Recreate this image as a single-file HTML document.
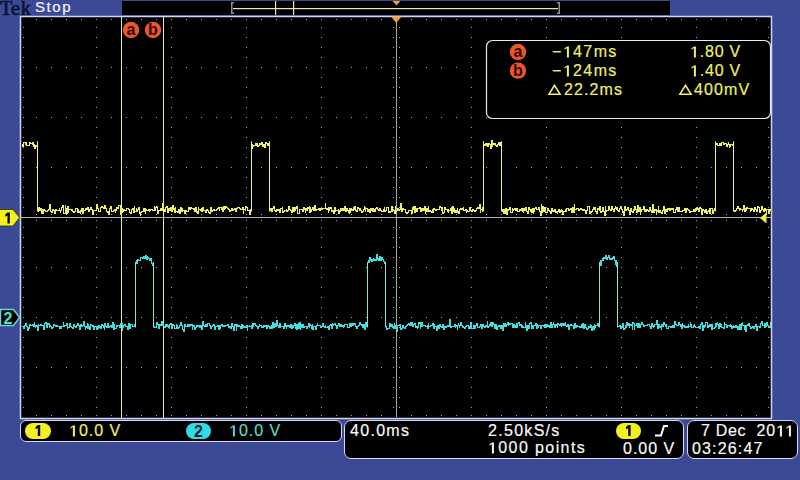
<!DOCTYPE html>
<html><head><meta charset="utf-8"><style>
html,body{margin:0;padding:0;}
body{width:800px;height:480px;background:#3c4a96;position:relative;overflow:hidden;font-family:"Liberation Sans",sans-serif;}
.t{position:absolute;white-space:pre;line-height:1;font-size:16px;-webkit-text-stroke:0.2px currentColor;}
.o{display:inline-block;position:relative;height:16px;vertical-align:top;}
.o svg{position:absolute;left:0;top:0;}
svg{position:absolute;left:0;top:0;}
.box{position:absolute;background:#000;border:1.5px solid #d4d8f8;box-sizing:border-box;}
.pill{position:absolute;border-radius:8px;text-align:center;font-size:16px;line-height:17px;font-weight:bold;}
</style></head><body>
<div class="t" style="left:0;top:-2px;font-family:'Liberation Serif',serif;font-weight:normal;font-size:20px;letter-spacing:0.2px;color:#0e1236;-webkit-text-stroke:0.7px #0e1236;">T<span style="margin-left:-1.5px">e</span><span style="margin-left:0.8px">k</span></div>
<div class="t" style="left:35px;top:-1px;color:#f4f4ff;letter-spacing:1.6px;font-size:15px;">Stop</div>
<svg width="800" height="480" viewBox="0 0 800 480"><rect x="20" y="16" width="752" height="403" fill="#000"/><path d="M23 27h1v1h-1zM23 37h1v1h-1zM23 47h1v1h-1zM23 57h1v1h-1zM23 67h1v1h-1zM23 77h1v1h-1zM23 87h1v1h-1zM23 97h1v1h-1zM23 107h1v1h-1zM23 117h1v1h-1zM23 127h1v1h-1zM23 137h1v1h-1zM23 147h1v1h-1zM23 157h1v1h-1zM23 167h1v1h-1zM23 177h1v1h-1zM23 187h1v1h-1zM23 197h1v1h-1zM23 207h1v1h-1zM23 217h1v1h-1zM23 227h1v1h-1zM23 237h1v1h-1zM23 247h1v1h-1zM23 257h1v1h-1zM23 267h1v1h-1zM23 277h1v1h-1zM23 287h1v1h-1zM23 297h1v1h-1zM23 307h1v1h-1zM23 317h1v1h-1zM23 327h1v1h-1zM23 337h1v1h-1zM23 347h1v1h-1zM23 357h1v1h-1zM23 367h1v1h-1zM23 377h1v1h-1zM23 387h1v1h-1zM23 397h1v1h-1zM23 407h1v1h-1zM36 19h1v1h-1zM36 67h1v1h-1zM36 117h1v1h-1zM36 167h1v1h-1zM36 214h1v1h-1zM36 220h1v1h-1zM36 267h1v1h-1zM36 317h1v1h-1zM36 367h1v1h-1zM36 415h1v1h-1zM51 19h1v1h-1zM51 67h1v1h-1zM51 117h1v1h-1zM51 167h1v1h-1zM51 214h1v1h-1zM51 220h1v1h-1zM51 267h1v1h-1zM51 317h1v1h-1zM51 367h1v1h-1zM51 415h1v1h-1zM66 19h1v1h-1zM66 67h1v1h-1zM66 117h1v1h-1zM66 167h1v1h-1zM66 214h1v1h-1zM66 220h1v1h-1zM66 267h1v1h-1zM66 317h1v1h-1zM66 367h1v1h-1zM66 415h1v1h-1zM81 19h1v1h-1zM81 67h1v1h-1zM81 117h1v1h-1zM81 167h1v1h-1zM81 214h1v1h-1zM81 220h1v1h-1zM81 267h1v1h-1zM81 317h1v1h-1zM81 367h1v1h-1zM81 415h1v1h-1zM96 19h1v1h-1zM96 27h1v1h-1zM96 37h1v1h-1zM96 47h1v1h-1zM96 57h1v1h-1zM96 67h1v1h-1zM96 77h1v1h-1zM96 87h1v1h-1zM96 97h1v1h-1zM96 107h1v1h-1zM96 117h1v1h-1zM96 127h1v1h-1zM96 137h1v1h-1zM96 147h1v1h-1zM96 157h1v1h-1zM96 167h1v1h-1zM96 177h1v1h-1zM96 187h1v1h-1zM96 197h1v1h-1zM96 207h1v1h-1zM96 214h1v1h-1zM96 217h1v1h-1zM96 220h1v1h-1zM96 227h1v1h-1zM96 237h1v1h-1zM96 247h1v1h-1zM96 257h1v1h-1zM96 267h1v1h-1zM96 277h1v1h-1zM96 287h1v1h-1zM96 297h1v1h-1zM96 307h1v1h-1zM96 317h1v1h-1zM96 327h1v1h-1zM96 337h1v1h-1zM96 347h1v1h-1zM96 357h1v1h-1zM96 367h1v1h-1zM96 377h1v1h-1zM96 387h1v1h-1zM96 397h1v1h-1zM96 407h1v1h-1zM96 415h1v1h-1zM111 19h1v1h-1zM111 67h1v1h-1zM111 117h1v1h-1zM111 167h1v1h-1zM111 214h1v1h-1zM111 220h1v1h-1zM111 267h1v1h-1zM111 317h1v1h-1zM111 367h1v1h-1zM111 415h1v1h-1zM126 19h1v1h-1zM126 67h1v1h-1zM126 117h1v1h-1zM126 167h1v1h-1zM126 214h1v1h-1zM126 220h1v1h-1zM126 267h1v1h-1zM126 317h1v1h-1zM126 367h1v1h-1zM126 415h1v1h-1zM141 19h1v1h-1zM141 67h1v1h-1zM141 117h1v1h-1zM141 167h1v1h-1zM141 214h1v1h-1zM141 220h1v1h-1zM141 267h1v1h-1zM141 317h1v1h-1zM141 367h1v1h-1zM141 415h1v1h-1zM156 19h1v1h-1zM156 67h1v1h-1zM156 117h1v1h-1zM156 167h1v1h-1zM156 214h1v1h-1zM156 220h1v1h-1zM156 267h1v1h-1zM156 317h1v1h-1zM156 367h1v1h-1zM156 415h1v1h-1zM171 19h1v1h-1zM171 27h1v1h-1zM171 37h1v1h-1zM171 47h1v1h-1zM171 57h1v1h-1zM171 67h1v1h-1zM171 77h1v1h-1zM171 87h1v1h-1zM171 97h1v1h-1zM171 107h1v1h-1zM171 117h1v1h-1zM171 127h1v1h-1zM171 137h1v1h-1zM171 147h1v1h-1zM171 157h1v1h-1zM171 167h1v1h-1zM171 177h1v1h-1zM171 187h1v1h-1zM171 197h1v1h-1zM171 207h1v1h-1zM171 214h1v1h-1zM171 217h1v1h-1zM171 220h1v1h-1zM171 227h1v1h-1zM171 237h1v1h-1zM171 247h1v1h-1zM171 257h1v1h-1zM171 267h1v1h-1zM171 277h1v1h-1zM171 287h1v1h-1zM171 297h1v1h-1zM171 307h1v1h-1zM171 317h1v1h-1zM171 327h1v1h-1zM171 337h1v1h-1zM171 347h1v1h-1zM171 357h1v1h-1zM171 367h1v1h-1zM171 377h1v1h-1zM171 387h1v1h-1zM171 397h1v1h-1zM171 407h1v1h-1zM171 415h1v1h-1zM186 19h1v1h-1zM186 67h1v1h-1zM186 117h1v1h-1zM186 167h1v1h-1zM186 214h1v1h-1zM186 220h1v1h-1zM186 267h1v1h-1zM186 317h1v1h-1zM186 367h1v1h-1zM186 415h1v1h-1zM201 19h1v1h-1zM201 67h1v1h-1zM201 117h1v1h-1zM201 167h1v1h-1zM201 214h1v1h-1zM201 220h1v1h-1zM201 267h1v1h-1zM201 317h1v1h-1zM201 367h1v1h-1zM201 415h1v1h-1zM216 19h1v1h-1zM216 67h1v1h-1zM216 117h1v1h-1zM216 167h1v1h-1zM216 214h1v1h-1zM216 220h1v1h-1zM216 267h1v1h-1zM216 317h1v1h-1zM216 367h1v1h-1zM216 415h1v1h-1zM231 19h1v1h-1zM231 67h1v1h-1zM231 117h1v1h-1zM231 167h1v1h-1zM231 214h1v1h-1zM231 220h1v1h-1zM231 267h1v1h-1zM231 317h1v1h-1zM231 367h1v1h-1zM231 415h1v1h-1zM246 19h1v1h-1zM246 27h1v1h-1zM246 37h1v1h-1zM246 47h1v1h-1zM246 57h1v1h-1zM246 67h1v1h-1zM246 77h1v1h-1zM246 87h1v1h-1zM246 97h1v1h-1zM246 107h1v1h-1zM246 117h1v1h-1zM246 127h1v1h-1zM246 137h1v1h-1zM246 147h1v1h-1zM246 157h1v1h-1zM246 167h1v1h-1zM246 177h1v1h-1zM246 187h1v1h-1zM246 197h1v1h-1zM246 207h1v1h-1zM246 214h1v1h-1zM246 217h1v1h-1zM246 220h1v1h-1zM246 227h1v1h-1zM246 237h1v1h-1zM246 247h1v1h-1zM246 257h1v1h-1zM246 267h1v1h-1zM246 277h1v1h-1zM246 287h1v1h-1zM246 297h1v1h-1zM246 307h1v1h-1zM246 317h1v1h-1zM246 327h1v1h-1zM246 337h1v1h-1zM246 347h1v1h-1zM246 357h1v1h-1zM246 367h1v1h-1zM246 377h1v1h-1zM246 387h1v1h-1zM246 397h1v1h-1zM246 407h1v1h-1zM246 415h1v1h-1zM261 19h1v1h-1zM261 67h1v1h-1zM261 117h1v1h-1zM261 167h1v1h-1zM261 214h1v1h-1zM261 220h1v1h-1zM261 267h1v1h-1zM261 317h1v1h-1zM261 367h1v1h-1zM261 415h1v1h-1zM276 19h1v1h-1zM276 67h1v1h-1zM276 117h1v1h-1zM276 167h1v1h-1zM276 214h1v1h-1zM276 220h1v1h-1zM276 267h1v1h-1zM276 317h1v1h-1zM276 367h1v1h-1zM276 415h1v1h-1zM291 19h1v1h-1zM291 67h1v1h-1zM291 117h1v1h-1zM291 167h1v1h-1zM291 214h1v1h-1zM291 220h1v1h-1zM291 267h1v1h-1zM291 317h1v1h-1zM291 367h1v1h-1zM291 415h1v1h-1zM306 19h1v1h-1zM306 67h1v1h-1zM306 117h1v1h-1zM306 167h1v1h-1zM306 214h1v1h-1zM306 220h1v1h-1zM306 267h1v1h-1zM306 317h1v1h-1zM306 367h1v1h-1zM306 415h1v1h-1zM321 19h1v1h-1zM321 27h1v1h-1zM321 37h1v1h-1zM321 47h1v1h-1zM321 57h1v1h-1zM321 67h1v1h-1zM321 77h1v1h-1zM321 87h1v1h-1zM321 97h1v1h-1zM321 107h1v1h-1zM321 117h1v1h-1zM321 127h1v1h-1zM321 137h1v1h-1zM321 147h1v1h-1zM321 157h1v1h-1zM321 167h1v1h-1zM321 177h1v1h-1zM321 187h1v1h-1zM321 197h1v1h-1zM321 207h1v1h-1zM321 214h1v1h-1zM321 217h1v1h-1zM321 220h1v1h-1zM321 227h1v1h-1zM321 237h1v1h-1zM321 247h1v1h-1zM321 257h1v1h-1zM321 267h1v1h-1zM321 277h1v1h-1zM321 287h1v1h-1zM321 297h1v1h-1zM321 307h1v1h-1zM321 317h1v1h-1zM321 327h1v1h-1zM321 337h1v1h-1zM321 347h1v1h-1zM321 357h1v1h-1zM321 367h1v1h-1zM321 377h1v1h-1zM321 387h1v1h-1zM321 397h1v1h-1zM321 407h1v1h-1zM321 415h1v1h-1zM336 19h1v1h-1zM336 67h1v1h-1zM336 117h1v1h-1zM336 167h1v1h-1zM336 214h1v1h-1zM336 220h1v1h-1zM336 267h1v1h-1zM336 317h1v1h-1zM336 367h1v1h-1zM336 415h1v1h-1zM351 19h1v1h-1zM351 67h1v1h-1zM351 117h1v1h-1zM351 167h1v1h-1zM351 214h1v1h-1zM351 220h1v1h-1zM351 267h1v1h-1zM351 317h1v1h-1zM351 367h1v1h-1zM351 415h1v1h-1zM366 19h1v1h-1zM366 67h1v1h-1zM366 117h1v1h-1zM366 167h1v1h-1zM366 214h1v1h-1zM366 220h1v1h-1zM366 267h1v1h-1zM366 317h1v1h-1zM366 367h1v1h-1zM366 415h1v1h-1zM381 19h1v1h-1zM381 67h1v1h-1zM381 117h1v1h-1zM381 167h1v1h-1zM381 214h1v1h-1zM381 220h1v1h-1zM381 267h1v1h-1zM381 317h1v1h-1zM381 367h1v1h-1zM381 415h1v1h-1zM393 27h1v1h-1zM393 37h1v1h-1zM393 47h1v1h-1zM393 57h1v1h-1zM393 67h1v1h-1zM393 77h1v1h-1zM393 87h1v1h-1zM393 97h1v1h-1zM393 107h1v1h-1zM393 117h1v1h-1zM393 127h1v1h-1zM393 137h1v1h-1zM393 147h1v1h-1zM393 157h1v1h-1zM393 167h1v1h-1zM393 177h1v1h-1zM393 187h1v1h-1zM393 197h1v1h-1zM393 207h1v1h-1zM393 217h1v1h-1zM393 227h1v1h-1zM393 237h1v1h-1zM393 247h1v1h-1zM393 257h1v1h-1zM393 267h1v1h-1zM393 277h1v1h-1zM393 287h1v1h-1zM393 297h1v1h-1zM393 307h1v1h-1zM393 317h1v1h-1zM393 327h1v1h-1zM393 337h1v1h-1zM393 347h1v1h-1zM393 357h1v1h-1zM393 367h1v1h-1zM393 377h1v1h-1zM393 387h1v1h-1zM393 397h1v1h-1zM393 407h1v1h-1zM396 19h1v1h-1zM396 67h1v1h-1zM396 117h1v1h-1zM396 167h1v1h-1zM396 214h1v1h-1zM396 220h1v1h-1zM396 267h1v1h-1zM396 317h1v1h-1zM396 367h1v1h-1zM396 415h1v1h-1zM399 27h1v1h-1zM399 37h1v1h-1zM399 47h1v1h-1zM399 57h1v1h-1zM399 67h1v1h-1zM399 77h1v1h-1zM399 87h1v1h-1zM399 97h1v1h-1zM399 107h1v1h-1zM399 117h1v1h-1zM399 127h1v1h-1zM399 137h1v1h-1zM399 147h1v1h-1zM399 157h1v1h-1zM399 167h1v1h-1zM399 177h1v1h-1zM399 187h1v1h-1zM399 197h1v1h-1zM399 207h1v1h-1zM399 217h1v1h-1zM399 227h1v1h-1zM399 237h1v1h-1zM399 247h1v1h-1zM399 257h1v1h-1zM399 267h1v1h-1zM399 277h1v1h-1zM399 287h1v1h-1zM399 297h1v1h-1zM399 307h1v1h-1zM399 317h1v1h-1zM399 327h1v1h-1zM399 337h1v1h-1zM399 347h1v1h-1zM399 357h1v1h-1zM399 367h1v1h-1zM399 377h1v1h-1zM399 387h1v1h-1zM399 397h1v1h-1zM399 407h1v1h-1zM411 19h1v1h-1zM411 67h1v1h-1zM411 117h1v1h-1zM411 167h1v1h-1zM411 214h1v1h-1zM411 220h1v1h-1zM411 267h1v1h-1zM411 317h1v1h-1zM411 367h1v1h-1zM411 415h1v1h-1zM426 19h1v1h-1zM426 67h1v1h-1zM426 117h1v1h-1zM426 167h1v1h-1zM426 214h1v1h-1zM426 220h1v1h-1zM426 267h1v1h-1zM426 317h1v1h-1zM426 367h1v1h-1zM426 415h1v1h-1zM441 19h1v1h-1zM441 67h1v1h-1zM441 117h1v1h-1zM441 167h1v1h-1zM441 214h1v1h-1zM441 220h1v1h-1zM441 267h1v1h-1zM441 317h1v1h-1zM441 367h1v1h-1zM441 415h1v1h-1zM456 19h1v1h-1zM456 67h1v1h-1zM456 117h1v1h-1zM456 167h1v1h-1zM456 214h1v1h-1zM456 220h1v1h-1zM456 267h1v1h-1zM456 317h1v1h-1zM456 367h1v1h-1zM456 415h1v1h-1zM471 19h1v1h-1zM471 27h1v1h-1zM471 37h1v1h-1zM471 47h1v1h-1zM471 57h1v1h-1zM471 67h1v1h-1zM471 77h1v1h-1zM471 87h1v1h-1zM471 97h1v1h-1zM471 107h1v1h-1zM471 117h1v1h-1zM471 127h1v1h-1zM471 137h1v1h-1zM471 147h1v1h-1zM471 157h1v1h-1zM471 167h1v1h-1zM471 177h1v1h-1zM471 187h1v1h-1zM471 197h1v1h-1zM471 207h1v1h-1zM471 214h1v1h-1zM471 217h1v1h-1zM471 220h1v1h-1zM471 227h1v1h-1zM471 237h1v1h-1zM471 247h1v1h-1zM471 257h1v1h-1zM471 267h1v1h-1zM471 277h1v1h-1zM471 287h1v1h-1zM471 297h1v1h-1zM471 307h1v1h-1zM471 317h1v1h-1zM471 327h1v1h-1zM471 337h1v1h-1zM471 347h1v1h-1zM471 357h1v1h-1zM471 367h1v1h-1zM471 377h1v1h-1zM471 387h1v1h-1zM471 397h1v1h-1zM471 407h1v1h-1zM471 415h1v1h-1zM486 19h1v1h-1zM486 67h1v1h-1zM486 117h1v1h-1zM486 167h1v1h-1zM486 214h1v1h-1zM486 220h1v1h-1zM486 267h1v1h-1zM486 317h1v1h-1zM486 367h1v1h-1zM486 415h1v1h-1zM501 19h1v1h-1zM501 67h1v1h-1zM501 117h1v1h-1zM501 167h1v1h-1zM501 214h1v1h-1zM501 220h1v1h-1zM501 267h1v1h-1zM501 317h1v1h-1zM501 367h1v1h-1zM501 415h1v1h-1zM516 19h1v1h-1zM516 67h1v1h-1zM516 117h1v1h-1zM516 167h1v1h-1zM516 214h1v1h-1zM516 220h1v1h-1zM516 267h1v1h-1zM516 317h1v1h-1zM516 367h1v1h-1zM516 415h1v1h-1zM531 19h1v1h-1zM531 67h1v1h-1zM531 117h1v1h-1zM531 167h1v1h-1zM531 214h1v1h-1zM531 220h1v1h-1zM531 267h1v1h-1zM531 317h1v1h-1zM531 367h1v1h-1zM531 415h1v1h-1zM546 19h1v1h-1zM546 27h1v1h-1zM546 37h1v1h-1zM546 47h1v1h-1zM546 57h1v1h-1zM546 67h1v1h-1zM546 77h1v1h-1zM546 87h1v1h-1zM546 97h1v1h-1zM546 107h1v1h-1zM546 117h1v1h-1zM546 127h1v1h-1zM546 137h1v1h-1zM546 147h1v1h-1zM546 157h1v1h-1zM546 167h1v1h-1zM546 177h1v1h-1zM546 187h1v1h-1zM546 197h1v1h-1zM546 207h1v1h-1zM546 214h1v1h-1zM546 217h1v1h-1zM546 220h1v1h-1zM546 227h1v1h-1zM546 237h1v1h-1zM546 247h1v1h-1zM546 257h1v1h-1zM546 267h1v1h-1zM546 277h1v1h-1zM546 287h1v1h-1zM546 297h1v1h-1zM546 307h1v1h-1zM546 317h1v1h-1zM546 327h1v1h-1zM546 337h1v1h-1zM546 347h1v1h-1zM546 357h1v1h-1zM546 367h1v1h-1zM546 377h1v1h-1zM546 387h1v1h-1zM546 397h1v1h-1zM546 407h1v1h-1zM546 415h1v1h-1zM561 19h1v1h-1zM561 67h1v1h-1zM561 117h1v1h-1zM561 167h1v1h-1zM561 214h1v1h-1zM561 220h1v1h-1zM561 267h1v1h-1zM561 317h1v1h-1zM561 367h1v1h-1zM561 415h1v1h-1zM576 19h1v1h-1zM576 67h1v1h-1zM576 117h1v1h-1zM576 167h1v1h-1zM576 214h1v1h-1zM576 220h1v1h-1zM576 267h1v1h-1zM576 317h1v1h-1zM576 367h1v1h-1zM576 415h1v1h-1zM591 19h1v1h-1zM591 67h1v1h-1zM591 117h1v1h-1zM591 167h1v1h-1zM591 214h1v1h-1zM591 220h1v1h-1zM591 267h1v1h-1zM591 317h1v1h-1zM591 367h1v1h-1zM591 415h1v1h-1zM606 19h1v1h-1zM606 67h1v1h-1zM606 117h1v1h-1zM606 167h1v1h-1zM606 214h1v1h-1zM606 220h1v1h-1zM606 267h1v1h-1zM606 317h1v1h-1zM606 367h1v1h-1zM606 415h1v1h-1zM621 19h1v1h-1zM621 27h1v1h-1zM621 37h1v1h-1zM621 47h1v1h-1zM621 57h1v1h-1zM621 67h1v1h-1zM621 77h1v1h-1zM621 87h1v1h-1zM621 97h1v1h-1zM621 107h1v1h-1zM621 117h1v1h-1zM621 127h1v1h-1zM621 137h1v1h-1zM621 147h1v1h-1zM621 157h1v1h-1zM621 167h1v1h-1zM621 177h1v1h-1zM621 187h1v1h-1zM621 197h1v1h-1zM621 207h1v1h-1zM621 214h1v1h-1zM621 217h1v1h-1zM621 220h1v1h-1zM621 227h1v1h-1zM621 237h1v1h-1zM621 247h1v1h-1zM621 257h1v1h-1zM621 267h1v1h-1zM621 277h1v1h-1zM621 287h1v1h-1zM621 297h1v1h-1zM621 307h1v1h-1zM621 317h1v1h-1zM621 327h1v1h-1zM621 337h1v1h-1zM621 347h1v1h-1zM621 357h1v1h-1zM621 367h1v1h-1zM621 377h1v1h-1zM621 387h1v1h-1zM621 397h1v1h-1zM621 407h1v1h-1zM621 415h1v1h-1zM636 19h1v1h-1zM636 67h1v1h-1zM636 117h1v1h-1zM636 167h1v1h-1zM636 214h1v1h-1zM636 220h1v1h-1zM636 267h1v1h-1zM636 317h1v1h-1zM636 367h1v1h-1zM636 415h1v1h-1zM651 19h1v1h-1zM651 67h1v1h-1zM651 117h1v1h-1zM651 167h1v1h-1zM651 214h1v1h-1zM651 220h1v1h-1zM651 267h1v1h-1zM651 317h1v1h-1zM651 367h1v1h-1zM651 415h1v1h-1zM666 19h1v1h-1zM666 67h1v1h-1zM666 117h1v1h-1zM666 167h1v1h-1zM666 214h1v1h-1zM666 220h1v1h-1zM666 267h1v1h-1zM666 317h1v1h-1zM666 367h1v1h-1zM666 415h1v1h-1zM681 19h1v1h-1zM681 67h1v1h-1zM681 117h1v1h-1zM681 167h1v1h-1zM681 214h1v1h-1zM681 220h1v1h-1zM681 267h1v1h-1zM681 317h1v1h-1zM681 367h1v1h-1zM681 415h1v1h-1zM696 19h1v1h-1zM696 27h1v1h-1zM696 37h1v1h-1zM696 47h1v1h-1zM696 57h1v1h-1zM696 67h1v1h-1zM696 77h1v1h-1zM696 87h1v1h-1zM696 97h1v1h-1zM696 107h1v1h-1zM696 117h1v1h-1zM696 127h1v1h-1zM696 137h1v1h-1zM696 147h1v1h-1zM696 157h1v1h-1zM696 167h1v1h-1zM696 177h1v1h-1zM696 187h1v1h-1zM696 197h1v1h-1zM696 207h1v1h-1zM696 214h1v1h-1zM696 217h1v1h-1zM696 220h1v1h-1zM696 227h1v1h-1zM696 237h1v1h-1zM696 247h1v1h-1zM696 257h1v1h-1zM696 267h1v1h-1zM696 277h1v1h-1zM696 287h1v1h-1zM696 297h1v1h-1zM696 307h1v1h-1zM696 317h1v1h-1zM696 327h1v1h-1zM696 337h1v1h-1zM696 347h1v1h-1zM696 357h1v1h-1zM696 367h1v1h-1zM696 377h1v1h-1zM696 387h1v1h-1zM696 397h1v1h-1zM696 407h1v1h-1zM696 415h1v1h-1zM711 19h1v1h-1zM711 67h1v1h-1zM711 117h1v1h-1zM711 167h1v1h-1zM711 214h1v1h-1zM711 220h1v1h-1zM711 267h1v1h-1zM711 317h1v1h-1zM711 367h1v1h-1zM711 415h1v1h-1zM726 19h1v1h-1zM726 67h1v1h-1zM726 117h1v1h-1zM726 167h1v1h-1zM726 214h1v1h-1zM726 220h1v1h-1zM726 267h1v1h-1zM726 317h1v1h-1zM726 367h1v1h-1zM726 415h1v1h-1zM741 19h1v1h-1zM741 67h1v1h-1zM741 117h1v1h-1zM741 167h1v1h-1zM741 214h1v1h-1zM741 220h1v1h-1zM741 267h1v1h-1zM741 317h1v1h-1zM741 367h1v1h-1zM741 415h1v1h-1zM756 19h1v1h-1zM756 67h1v1h-1zM756 117h1v1h-1zM756 167h1v1h-1zM756 214h1v1h-1zM756 220h1v1h-1zM756 267h1v1h-1zM756 317h1v1h-1zM756 367h1v1h-1zM756 415h1v1h-1zM768 27h1v1h-1zM768 37h1v1h-1zM768 47h1v1h-1zM768 57h1v1h-1zM768 67h1v1h-1zM768 77h1v1h-1zM768 87h1v1h-1zM768 97h1v1h-1zM768 107h1v1h-1zM768 117h1v1h-1zM768 127h1v1h-1zM768 137h1v1h-1zM768 147h1v1h-1zM768 157h1v1h-1zM768 167h1v1h-1zM768 177h1v1h-1zM768 187h1v1h-1zM768 197h1v1h-1zM768 207h1v1h-1zM768 217h1v1h-1zM768 227h1v1h-1zM768 237h1v1h-1zM768 247h1v1h-1zM768 257h1v1h-1zM768 267h1v1h-1zM768 277h1v1h-1zM768 287h1v1h-1zM768 297h1v1h-1zM768 307h1v1h-1zM768 317h1v1h-1zM768 327h1v1h-1zM768 337h1v1h-1zM768 347h1v1h-1zM768 357h1v1h-1zM768 367h1v1h-1zM768 377h1v1h-1zM768 387h1v1h-1zM768 397h1v1h-1zM768 407h1v1h-1z" fill="#a8a8a8"/><rect x="396" y="17" width="1" height="400" fill="#a8a8a0"/><rect x="21" y="217" width="750" height="1" fill="#b4b4a8"/><rect x="121" y="17" width="1" height="401" fill="#e4ecac"/><rect x="163" y="17" width="1" height="401" fill="#e4ecac"/><path d="M37 141.2h1v70.30000000000001h-1zM251 141.2h1v70.30000000000001h-1zM269 141.2h1v70.30000000000001h-1zM483 141.2h1v70.30000000000001h-1zM501 141.2h1v70.30000000000001h-1zM715 141.2h1v70.30000000000001h-1zM733 141.2h1v70.30000000000001h-1z" fill="#f0f0a0"/><path d="M22 144h1v3h-1zM23 142h1v5h-1zM24 142h1v1h-1zM25 142h1v3h-1zM26 142h1v4h-1zM27 145h1v1h-1zM28 145h1v1h-1zM29 142h1v4h-1zM30 142h1v2h-1zM31 143h1v1h-1zM32 142h1v3h-1zM33 142h1v5h-1zM34 144h1v5h-1zM35 145h1v4h-1zM36 145h1v2h-1zM38 207h1v5h-1zM39 207h1v4h-1zM40 208h1v3h-1zM41 208h1v6h-1zM42 209h1v5h-1zM43 209h1v5h-1zM44 209h1v2h-1zM45 210h1v2h-1zM46 211h1v1h-1zM47 210h1v2h-1zM48 209h1v2h-1zM49 204h1v6h-1zM50 204h1v8h-1zM51 211h1v2h-1zM52 209h1v4h-1zM53 209h1v2h-1zM54 210h1v4h-1zM55 209h1v5h-1zM56 209h1v2h-1zM57 210h1v1h-1zM58 210h1v1h-1zM59 208h1v3h-1zM60 210h1v3h-1zM61 207h1v4h-1zM62 205h1v3h-1zM63 205h1v9h-1zM64 213h1v1h-1zM65 205h1v9h-1zM66 208h1v6h-1zM67 206h1v8h-1zM68 206h1v7h-1zM69 209h1v1h-1zM70 209h1v1h-1zM71 209h1v2h-1zM72 209h1v3h-1zM73 211h1v2h-1zM74 211h1v2h-1zM75 208h1v4h-1zM76 208h1v1h-1zM77 208h1v5h-1zM78 209h1v4h-1zM79 211h1v2h-1zM80 210h1v4h-1zM81 208h1v4h-1zM82 208h1v6h-1zM83 208h1v6h-1zM84 210h1v1h-1zM85 208h1v3h-1zM86 208h1v2h-1zM87 207h1v3h-1zM88 207h1v5h-1zM89 209h1v3h-1zM90 207h1v3h-1zM91 207h1v3h-1zM92 209h1v6h-1zM93 210h1v5h-1zM94 210h1v1h-1zM95 210h1v1h-1zM96 204h1v7h-1zM97 204h1v5h-1zM98 208h1v4h-1zM99 211h1v1h-1zM100 207h1v5h-1zM101 206h1v2h-1zM102 206h1v2h-1zM103 207h1v2h-1zM104 205h1v4h-1zM105 205h1v4h-1zM106 208h1v4h-1zM107 211h1v2h-1zM108 211h1v4h-1zM109 208h1v7h-1zM110 206h1v3h-1zM111 206h1v6h-1zM112 211h1v1h-1zM113 210h1v2h-1zM114 209h1v2h-1zM115 209h1v4h-1zM116 207h1v4h-1zM117 207h1v2h-1zM118 205h1v4h-1zM119 205h1v1h-1zM120 205h1v10h-1zM121 208h1v7h-1zM122 208h1v5h-1zM123 209h1v3h-1zM124 209h1v2h-1zM125 210h1v1h-1zM126 208h1v3h-1zM127 208h1v1h-1zM128 208h1v2h-1zM129 209h1v4h-1zM130 212h1v2h-1zM131 209h1v5h-1zM132 208h1v2h-1zM133 208h1v5h-1zM134 206h1v7h-1zM135 211h1v1h-1zM136 208h1v4h-1zM137 209h1v3h-1zM138 207h1v3h-1zM139 207h1v7h-1zM140 212h1v4h-1zM141 211h1v2h-1zM142 211h1v1h-1zM143 208h1v4h-1zM144 208h1v4h-1zM145 208h1v6h-1zM146 209h1v2h-1zM147 210h1v1h-1zM148 209h1v2h-1zM149 209h1v3h-1zM150 209h1v2h-1zM151 209h1v1h-1zM152 209h1v2h-1zM153 210h1v1h-1zM154 206h1v5h-1zM155 207h1v4h-1zM156 206h1v2h-1zM157 206h1v8h-1zM158 210h1v4h-1zM159 210h1v1h-1zM160 208h1v3h-1zM161 208h1v3h-1zM162 203h1v8h-1zM163 203h1v7h-1zM164 209h1v3h-1zM165 207h1v5h-1zM166 206h1v2h-1zM167 206h1v7h-1zM168 208h1v5h-1zM169 208h1v3h-1zM170 207h1v4h-1zM171 207h1v5h-1zM172 205h1v7h-1zM173 205h1v5h-1zM174 208h1v5h-1zM175 207h1v6h-1zM176 211h1v1h-1zM177 211h1v2h-1zM178 209h1v4h-1zM179 209h1v5h-1zM180 207h1v7h-1zM181 207h1v5h-1zM182 208h1v4h-1zM183 210h1v1h-1zM184 210h1v4h-1zM185 210h1v4h-1zM186 210h1v2h-1zM187 211h1v1h-1zM188 207h1v5h-1zM189 207h1v3h-1zM190 207h1v3h-1zM191 207h1v2h-1zM192 208h1v1h-1zM193 208h1v2h-1zM194 208h1v4h-1zM195 207h1v5h-1zM196 207h1v6h-1zM197 211h1v3h-1zM198 207h1v7h-1zM199 209h1v1h-1zM200 209h1v2h-1zM201 208h1v4h-1zM202 207h1v5h-1zM203 207h1v4h-1zM204 210h1v1h-1zM205 210h1v3h-1zM206 209h1v4h-1zM207 209h1v2h-1zM208 210h1v3h-1zM209 212h1v2h-1zM210 207h1v7h-1zM211 207h1v5h-1zM212 210h1v2h-1zM213 209h1v2h-1zM214 209h1v2h-1zM215 210h1v1h-1zM216 209h1v2h-1zM217 208h1v2h-1zM218 207h1v2h-1zM219 207h1v4h-1zM220 207h1v1h-1zM221 207h1v3h-1zM222 207h1v5h-1zM223 206h1v6h-1zM224 206h1v4h-1zM225 206h1v3h-1zM226 206h1v2h-1zM227 207h1v2h-1zM228 208h1v2h-1zM229 209h1v3h-1zM230 210h1v2h-1zM231 208h1v3h-1zM232 208h1v3h-1zM233 209h1v2h-1zM234 208h1v2h-1zM235 208h1v4h-1zM236 208h1v4h-1zM237 207h1v2h-1zM238 207h1v1h-1zM239 207h1v2h-1zM240 208h1v2h-1zM241 209h1v1h-1zM242 207h1v3h-1zM243 207h1v7h-1zM244 209h1v1h-1zM245 206h1v5h-1zM246 206h1v2h-1zM247 207h1v4h-1zM248 210h1v1h-1zM249 210h1v5h-1zM250 209h1v6h-1zM252 144h1v5h-1zM253 145h1v2h-1zM254 145h1v1h-1zM255 143h1v3h-1zM256 143h1v3h-1zM257 143h1v4h-1zM258 145h1v2h-1zM259 143h1v3h-1zM260 143h1v2h-1zM261 142h1v3h-1zM262 142h1v5h-1zM263 144h1v3h-1zM264 144h1v4h-1zM265 142h1v6h-1zM266 142h1v2h-1zM267 143h1v3h-1zM268 143h1v3h-1zM270 208h1v3h-1zM271 208h1v4h-1zM272 208h1v4h-1zM273 206h1v3h-1zM274 206h1v5h-1zM275 210h1v2h-1zM276 209h1v3h-1zM277 209h1v2h-1zM278 209h1v2h-1zM279 209h1v4h-1zM280 208h1v5h-1zM281 208h1v1h-1zM282 207h1v6h-1zM283 211h1v2h-1zM284 210h1v2h-1zM285 210h1v1h-1zM286 209h1v3h-1zM287 210h1v2h-1zM288 206h1v5h-1zM289 206h1v4h-1zM290 209h1v2h-1zM291 210h1v3h-1zM292 207h1v6h-1zM293 207h1v5h-1zM294 207h1v5h-1zM295 207h1v4h-1zM296 206h1v3h-1zM297 206h1v8h-1zM298 213h1v1h-1zM299 209h1v5h-1zM300 209h1v1h-1zM301 209h1v1h-1zM302 209h1v3h-1zM303 207h1v5h-1zM304 207h1v3h-1zM305 208h1v5h-1zM306 208h1v3h-1zM307 207h1v4h-1zM308 207h1v2h-1zM309 206h1v7h-1zM310 207h1v6h-1zM311 209h1v3h-1zM312 207h1v3h-1zM313 207h1v4h-1zM314 205h1v6h-1zM315 205h1v6h-1zM316 209h1v2h-1zM317 209h1v1h-1zM318 208h1v2h-1zM319 208h1v3h-1zM320 208h1v3h-1zM321 208h1v2h-1zM322 208h1v2h-1zM323 208h1v1h-1zM324 208h1v1h-1zM325 203h1v6h-1zM326 208h1v2h-1zM327 208h1v2h-1zM328 207h1v6h-1zM329 207h1v4h-1zM330 207h1v2h-1zM331 207h1v5h-1zM332 210h1v2h-1zM333 210h1v4h-1zM334 207h1v7h-1zM335 207h1v5h-1zM336 210h1v1h-1zM337 210h1v1h-1zM338 209h1v5h-1zM339 210h1v4h-1zM340 208h1v4h-1zM341 208h1v3h-1zM342 208h1v3h-1zM343 208h1v3h-1zM344 206h1v5h-1zM345 206h1v6h-1zM346 208h1v4h-1zM347 208h1v3h-1zM348 210h1v3h-1zM349 208h1v6h-1zM350 208h1v5h-1zM351 208h1v3h-1zM352 209h1v2h-1zM353 207h1v4h-1zM354 206h1v4h-1zM355 206h1v5h-1zM356 210h1v2h-1zM357 207h1v5h-1zM358 207h1v2h-1zM359 208h1v3h-1zM360 208h1v3h-1zM361 210h1v3h-1zM362 211h1v2h-1zM363 209h1v3h-1zM364 206h1v4h-1zM365 207h1v5h-1zM366 208h1v1h-1zM367 208h1v4h-1zM368 209h1v3h-1zM369 209h1v4h-1zM370 208h1v5h-1zM371 208h1v3h-1zM372 208h1v4h-1zM373 208h1v4h-1zM374 209h1v3h-1zM375 208h1v4h-1zM376 207h1v2h-1zM377 207h1v3h-1zM378 209h1v2h-1zM379 208h1v3h-1zM380 208h1v3h-1zM381 210h1v2h-1zM382 211h1v1h-1zM383 209h1v3h-1zM384 207h1v5h-1zM385 210h1v2h-1zM386 207h1v4h-1zM387 207h1v1h-1zM388 207h1v6h-1zM389 211h1v2h-1zM390 211h1v2h-1zM391 206h1v6h-1zM392 206h1v6h-1zM393 209h1v2h-1zM394 210h1v4h-1zM395 206h1v8h-1zM396 210h1v2h-1zM397 208h1v3h-1zM398 208h1v3h-1zM399 209h1v2h-1zM400 203h1v7h-1zM401 203h1v9h-1zM402 208h1v4h-1zM403 208h1v2h-1zM404 209h1v1h-1zM405 209h1v4h-1zM406 212h1v2h-1zM407 212h1v2h-1zM408 210h1v3h-1zM409 210h1v1h-1zM410 210h1v1h-1zM411 210h1v4h-1zM412 207h1v7h-1zM413 206h1v4h-1zM414 206h1v7h-1zM415 206h1v7h-1zM416 208h1v4h-1zM417 208h1v4h-1zM418 208h1v1h-1zM419 207h1v2h-1zM420 207h1v5h-1zM421 208h1v4h-1zM422 208h1v3h-1zM423 208h1v3h-1zM424 206h1v5h-1zM425 206h1v8h-1zM426 208h1v4h-1zM427 208h1v4h-1zM428 206h1v6h-1zM429 210h1v2h-1zM430 210h1v2h-1zM431 211h1v2h-1zM432 209h1v4h-1zM433 208h1v5h-1zM434 208h1v2h-1zM435 209h1v2h-1zM436 209h1v2h-1zM437 209h1v1h-1zM438 209h1v1h-1zM439 206h1v4h-1zM440 206h1v2h-1zM441 207h1v4h-1zM442 207h1v7h-1zM443 212h1v2h-1zM444 207h1v6h-1zM445 207h1v3h-1zM446 209h1v1h-1zM447 209h1v3h-1zM448 209h1v4h-1zM449 210h1v1h-1zM450 208h1v3h-1zM451 207h1v7h-1zM452 206h1v8h-1zM453 206h1v6h-1zM454 208h1v5h-1zM455 210h1v3h-1zM456 210h1v3h-1zM457 208h1v5h-1zM458 211h1v3h-1zM459 209h1v5h-1zM460 208h1v2h-1zM461 208h1v2h-1zM462 208h1v2h-1zM463 207h1v4h-1zM464 210h1v1h-1zM465 209h1v2h-1zM466 209h1v4h-1zM467 210h1v2h-1zM468 211h1v1h-1zM469 207h1v5h-1zM470 207h1v4h-1zM471 210h1v2h-1zM472 209h1v3h-1zM473 209h1v2h-1zM474 210h1v2h-1zM475 210h1v2h-1zM476 208h1v3h-1zM477 207h1v2h-1zM478 207h1v2h-1zM479 204h1v5h-1zM480 204h1v9h-1zM481 209h1v1h-1zM482 207h1v5h-1zM484 144h1v2h-1zM485 143h1v3h-1zM486 143h1v3h-1zM487 143h1v4h-1zM488 143h1v4h-1zM489 143h1v2h-1zM490 144h1v5h-1zM491 140h1v9h-1zM492 140h1v7h-1zM493 143h1v2h-1zM494 143h1v2h-1zM495 143h1v3h-1zM496 145h1v2h-1zM497 144h1v3h-1zM498 142h1v3h-1zM499 142h1v4h-1zM500 142h1v4h-1zM502 209h1v3h-1zM503 209h1v5h-1zM504 209h1v5h-1zM505 208h1v6h-1zM506 208h1v7h-1zM507 209h1v6h-1zM508 209h1v2h-1zM509 207h1v3h-1zM510 207h1v6h-1zM511 212h1v1h-1zM512 208h1v5h-1zM513 209h1v2h-1zM514 208h1v2h-1zM515 208h1v3h-1zM516 208h1v3h-1zM517 208h1v4h-1zM518 211h1v1h-1zM519 209h1v3h-1zM520 209h1v2h-1zM521 208h1v3h-1zM522 208h1v4h-1zM523 208h1v5h-1zM524 208h1v3h-1zM525 207h1v4h-1zM526 207h1v5h-1zM527 211h1v3h-1zM528 207h1v7h-1zM529 207h1v3h-1zM530 209h1v3h-1zM531 209h1v4h-1zM532 208h1v5h-1zM533 208h1v6h-1zM534 208h1v4h-1zM535 207h1v2h-1zM536 207h1v3h-1zM537 209h1v1h-1zM538 207h1v3h-1zM539 207h1v5h-1zM540 211h1v5h-1zM541 204h1v12h-1zM542 206h1v7h-1zM543 206h1v6h-1zM544 207h1v5h-1zM545 207h1v6h-1zM546 212h1v1h-1zM547 208h1v5h-1zM548 208h1v3h-1zM549 210h1v2h-1zM550 211h1v3h-1zM551 208h1v6h-1zM552 208h1v4h-1zM553 210h1v2h-1zM554 209h1v3h-1zM555 209h1v4h-1zM556 211h1v2h-1zM557 211h1v3h-1zM558 209h1v3h-1zM559 209h1v4h-1zM560 210h1v3h-1zM561 209h1v3h-1zM562 210h1v5h-1zM563 211h1v4h-1zM564 211h1v1h-1zM565 209h1v3h-1zM566 208h1v4h-1zM567 208h1v1h-1zM568 208h1v3h-1zM569 209h1v2h-1zM570 208h1v2h-1zM571 208h1v5h-1zM572 207h1v6h-1zM573 207h1v6h-1zM574 204h1v9h-1zM575 209h1v1h-1zM576 208h1v2h-1zM577 208h1v1h-1zM578 208h1v3h-1zM579 209h1v2h-1zM580 208h1v2h-1zM581 208h1v2h-1zM582 209h1v2h-1zM583 209h1v2h-1zM584 209h1v2h-1zM585 210h1v4h-1zM586 210h1v4h-1zM587 206h1v5h-1zM588 206h1v1h-1zM589 206h1v8h-1zM590 211h1v3h-1zM591 211h1v2h-1zM592 209h1v3h-1zM593 207h1v3h-1zM594 207h1v3h-1zM595 207h1v5h-1zM596 211h1v3h-1zM597 208h1v6h-1zM598 208h1v2h-1zM599 206h1v5h-1zM600 206h1v7h-1zM601 211h1v2h-1zM602 207h1v5h-1zM603 207h1v5h-1zM604 211h1v5h-1zM605 206h1v10h-1zM606 210h1v2h-1zM607 210h1v1h-1zM608 206h1v5h-1zM609 206h1v4h-1zM610 209h1v2h-1zM611 206h1v5h-1zM612 206h1v4h-1zM613 209h1v3h-1zM614 208h1v4h-1zM615 206h1v3h-1zM616 207h1v3h-1zM617 207h1v4h-1zM618 210h1v2h-1zM619 208h1v4h-1zM620 206h1v3h-1zM621 206h1v4h-1zM622 209h1v4h-1zM623 211h1v5h-1zM624 206h1v10h-1zM625 206h1v5h-1zM626 209h1v2h-1zM627 207h1v3h-1zM628 207h1v4h-1zM629 210h1v5h-1zM630 208h1v7h-1zM631 208h1v4h-1zM632 211h1v2h-1zM633 209h1v4h-1zM634 206h1v5h-1zM635 206h1v4h-1zM636 209h1v4h-1zM637 205h1v8h-1zM638 205h1v7h-1zM639 207h1v5h-1zM640 207h1v8h-1zM641 209h1v3h-1zM642 209h1v1h-1zM643 206h1v4h-1zM644 206h1v6h-1zM645 209h1v3h-1zM646 209h1v3h-1zM647 209h1v2h-1zM648 210h1v2h-1zM649 207h1v5h-1zM650 207h1v4h-1zM651 210h1v3h-1zM652 204h1v9h-1zM653 204h1v9h-1zM654 209h1v4h-1zM655 209h1v2h-1zM656 209h1v6h-1zM657 210h1v2h-1zM658 206h1v7h-1zM659 210h1v3h-1zM660 210h1v3h-1zM661 212h1v2h-1zM662 210h1v4h-1zM663 206h1v5h-1zM664 206h1v8h-1zM665 209h1v5h-1zM666 209h1v3h-1zM667 208h1v4h-1zM668 208h1v2h-1zM669 208h1v3h-1zM670 208h1v3h-1zM671 208h1v2h-1zM672 208h1v2h-1zM673 208h1v5h-1zM674 212h1v1h-1zM675 209h1v4h-1zM676 207h1v3h-1zM677 207h1v5h-1zM678 207h1v5h-1zM679 207h1v5h-1zM680 211h1v1h-1zM681 211h1v1h-1zM682 210h1v2h-1zM683 210h1v1h-1zM684 208h1v3h-1zM685 208h1v5h-1zM686 208h1v5h-1zM687 208h1v2h-1zM688 209h1v2h-1zM689 210h1v3h-1zM690 211h1v2h-1zM691 211h1v1h-1zM692 211h1v1h-1zM693 209h1v3h-1zM694 209h1v3h-1zM695 208h1v4h-1zM696 208h1v3h-1zM697 207h1v3h-1zM698 208h1v4h-1zM699 207h1v5h-1zM700 207h1v2h-1zM701 208h1v7h-1zM702 209h1v6h-1zM703 209h1v2h-1zM704 210h1v3h-1zM705 209h1v4h-1zM706 209h1v5h-1zM707 211h1v3h-1zM708 210h1v2h-1zM709 208h1v6h-1zM710 208h1v6h-1zM711 208h1v1h-1zM712 208h1v6h-1zM713 210h1v4h-1zM714 208h1v3h-1zM716 143h1v2h-1zM717 143h1v3h-1zM718 145h1v1h-1zM719 143h1v3h-1zM720 143h1v3h-1zM721 142h1v4h-1zM722 142h1v1h-1zM723 142h1v3h-1zM724 143h1v2h-1zM725 143h1v1h-1zM726 143h1v4h-1zM727 144h1v3h-1zM728 142h1v3h-1zM729 144h1v4h-1zM730 144h1v3h-1zM731 144h1v1h-1zM732 144h1v2h-1zM734 210h1v2h-1zM735 210h1v2h-1zM736 208h1v3h-1zM737 206h1v3h-1zM738 206h1v3h-1zM739 208h1v3h-1zM740 208h1v2h-1zM741 209h1v1h-1zM742 209h1v3h-1zM743 205h1v5h-1zM744 205h1v7h-1zM745 208h1v4h-1zM746 207h1v4h-1zM747 207h1v2h-1zM748 208h1v1h-1zM749 208h1v1h-1zM750 208h1v4h-1zM751 208h1v3h-1zM752 208h1v2h-1zM753 209h1v3h-1zM754 207h1v5h-1zM755 207h1v3h-1zM756 209h1v3h-1zM757 206h1v6h-1zM758 206h1v2h-1zM759 207h1v6h-1zM760 210h1v3h-1zM761 206h1v5h-1zM762 206h1v4h-1zM763 209h1v3h-1zM764 208h1v4h-1zM765 208h1v3h-1zM766 209h1v6h-1zM767 209h1v1h-1zM768 209h1v5h-1zM769 209h1v5h-1zM770 209h1v2h-1z" fill="#f0f060"/><path d="M135 262h1v65.5h-1zM153 262h1v65.5h-1zM367 262h1v65.5h-1zM385 262h1v65.5h-1zM599 262h1v65.5h-1zM617 262h1v65.5h-1z" fill="#80e8d8"/><path d="M22 326h1v1h-1zM23 326h1v3h-1zM24 325h1v4h-1zM25 323h1v3h-1zM26 323h1v4h-1zM27 326h1v5h-1zM28 327h1v4h-1zM29 324h1v5h-1zM30 324h1v2h-1zM31 325h1v1h-1zM32 324h1v2h-1zM33 324h1v3h-1zM34 322h1v5h-1zM35 325h1v3h-1zM36 325h1v2h-1zM37 325h1v6h-1zM38 324h1v7h-1zM39 325h1v1h-1zM40 324h1v2h-1zM41 324h1v2h-1zM42 325h1v1h-1zM43 325h1v5h-1zM44 323h1v7h-1zM45 322h1v2h-1zM46 322h1v6h-1zM47 323h1v5h-1zM48 323h1v2h-1zM49 323h1v5h-1zM50 325h1v2h-1zM51 326h1v3h-1zM52 327h1v2h-1zM53 324h1v4h-1zM54 324h1v2h-1zM55 325h1v2h-1zM56 325h1v2h-1zM57 325h1v2h-1zM58 326h1v1h-1zM59 326h1v3h-1zM60 326h1v3h-1zM61 326h1v3h-1zM62 326h1v1h-1zM63 322h1v5h-1zM64 325h1v2h-1zM65 325h1v1h-1zM66 323h1v3h-1zM67 323h1v6h-1zM68 327h1v1h-1zM69 323h1v5h-1zM70 323h1v4h-1zM71 326h1v2h-1zM72 327h1v2h-1zM73 324h1v5h-1zM74 324h1v3h-1zM75 326h1v2h-1zM76 325h1v3h-1zM77 323h1v3h-1zM78 323h1v3h-1zM79 325h1v5h-1zM80 324h1v6h-1zM81 324h1v3h-1zM82 325h1v2h-1zM83 321h1v5h-1zM84 321h1v6h-1zM85 326h1v4h-1zM86 326h1v2h-1zM87 323h1v6h-1zM88 324h1v5h-1zM89 326h1v4h-1zM90 324h1v6h-1zM91 324h1v2h-1zM92 325h1v2h-1zM93 325h1v5h-1zM94 326h1v4h-1zM95 326h1v1h-1zM96 326h1v4h-1zM97 326h1v4h-1zM98 325h1v4h-1zM99 325h1v3h-1zM100 326h1v3h-1zM101 324h1v5h-1zM102 324h1v2h-1zM103 325h1v3h-1zM104 323h1v7h-1zM105 323h1v4h-1zM106 326h1v2h-1zM107 323h1v5h-1zM108 323h1v5h-1zM109 326h1v2h-1zM110 325h1v2h-1zM111 325h1v3h-1zM112 322h1v6h-1zM113 322h1v8h-1zM114 324h1v6h-1zM115 328h1v1h-1zM116 325h1v4h-1zM117 325h1v2h-1zM118 325h1v1h-1zM119 325h1v3h-1zM120 323h1v5h-1zM121 323h1v2h-1zM122 323h1v8h-1zM123 325h1v3h-1zM124 324h1v2h-1zM125 324h1v3h-1zM126 326h1v1h-1zM127 326h1v4h-1zM128 323h1v7h-1zM129 323h1v6h-1zM130 324h1v5h-1zM131 324h1v1h-1zM132 324h1v3h-1zM133 326h1v1h-1zM134 324h1v3h-1zM136 260h1v4h-1zM137 259h1v5h-1zM138 259h1v2h-1zM139 260h1v1h-1zM140 257h1v4h-1zM141 257h1v1h-1zM142 257h1v2h-1zM143 256h1v3h-1zM144 256h1v3h-1zM145 255h1v4h-1zM146 255h1v5h-1zM147 256h1v4h-1zM148 257h1v2h-1zM149 258h1v3h-1zM150 258h1v3h-1zM151 258h1v6h-1zM152 263h1v3h-1zM154 326h1v2h-1zM155 327h1v1h-1zM156 322h1v6h-1zM157 322h1v3h-1zM158 324h1v5h-1zM159 324h1v5h-1zM160 324h1v2h-1zM161 321h1v5h-1zM162 321h1v5h-1zM163 323h1v4h-1zM164 326h1v2h-1zM165 324h1v4h-1zM166 324h1v3h-1zM167 324h1v3h-1zM168 325h1v3h-1zM169 324h1v5h-1zM170 323h1v2h-1zM171 323h1v6h-1zM172 324h1v5h-1zM173 324h1v2h-1zM174 325h1v4h-1zM175 328h1v1h-1zM176 324h1v5h-1zM177 325h1v4h-1zM178 327h1v2h-1zM179 325h1v3h-1zM180 322h1v4h-1zM181 322h1v4h-1zM182 325h1v5h-1zM183 329h1v3h-1zM184 324h1v8h-1zM185 324h1v3h-1zM186 326h1v1h-1zM187 324h1v3h-1zM188 324h1v3h-1zM189 324h1v3h-1zM190 324h1v2h-1zM191 324h1v2h-1zM192 324h1v6h-1zM193 325h1v2h-1zM194 325h1v5h-1zM195 327h1v3h-1zM196 325h1v3h-1zM197 325h1v2h-1zM198 325h1v2h-1zM199 325h1v3h-1zM200 325h1v3h-1zM201 325h1v5h-1zM202 321h1v9h-1zM203 321h1v5h-1zM204 325h1v2h-1zM205 324h1v3h-1zM206 324h1v3h-1zM207 323h1v4h-1zM208 323h1v1h-1zM209 323h1v3h-1zM210 325h1v4h-1zM211 326h1v3h-1zM212 325h1v2h-1zM213 324h1v2h-1zM214 324h1v6h-1zM215 326h1v4h-1zM216 326h1v1h-1zM217 325h1v2h-1zM218 325h1v5h-1zM219 325h1v5h-1zM220 325h1v4h-1zM221 324h1v2h-1zM222 324h1v3h-1zM223 325h1v2h-1zM224 325h1v2h-1zM225 325h1v2h-1zM226 325h1v1h-1zM227 324h1v2h-1zM228 324h1v4h-1zM229 326h1v2h-1zM230 326h1v3h-1zM231 323h1v6h-1zM232 323h1v4h-1zM233 326h1v5h-1zM234 324h1v7h-1zM235 324h1v2h-1zM236 324h1v7h-1zM237 324h1v3h-1zM238 325h1v2h-1zM239 325h1v2h-1zM240 326h1v3h-1zM241 324h1v5h-1zM242 324h1v5h-1zM243 325h1v3h-1zM244 326h1v2h-1zM245 326h1v2h-1zM246 325h1v3h-1zM247 325h1v6h-1zM248 326h1v1h-1zM249 325h1v2h-1zM250 326h1v1h-1zM251 325h1v4h-1zM252 323h1v6h-1zM253 323h1v4h-1zM254 323h1v2h-1zM255 323h1v3h-1zM256 325h1v2h-1zM257 326h1v3h-1zM258 326h1v3h-1zM259 324h1v3h-1zM260 325h1v1h-1zM261 325h1v3h-1zM262 326h1v2h-1zM263 325h1v3h-1zM264 325h1v2h-1zM265 325h1v2h-1zM266 325h1v4h-1zM267 325h1v4h-1zM268 325h1v2h-1zM269 326h1v3h-1zM270 326h1v3h-1zM271 325h1v4h-1zM272 322h1v7h-1zM273 322h1v6h-1zM274 323h1v5h-1zM275 323h1v4h-1zM276 320h1v7h-1zM277 320h1v6h-1zM278 325h1v3h-1zM279 323h1v5h-1zM280 323h1v5h-1zM281 326h1v1h-1zM282 326h1v1h-1zM283 326h1v3h-1zM284 323h1v6h-1zM285 323h1v4h-1zM286 325h1v4h-1zM287 325h1v2h-1zM288 325h1v2h-1zM289 325h1v3h-1zM290 324h1v4h-1zM291 324h1v5h-1zM292 325h1v4h-1zM293 325h1v3h-1zM294 323h1v3h-1zM295 323h1v6h-1zM296 324h1v6h-1zM297 324h1v6h-1zM298 323h1v6h-1zM299 322h1v7h-1zM300 322h1v8h-1zM301 324h1v4h-1zM302 324h1v4h-1zM303 324h1v4h-1zM304 326h1v2h-1zM305 326h1v1h-1zM306 326h1v3h-1zM307 326h1v3h-1zM308 323h1v4h-1zM309 323h1v5h-1zM310 324h1v2h-1zM311 325h1v4h-1zM312 324h1v6h-1zM313 326h1v4h-1zM314 326h1v1h-1zM315 326h1v4h-1zM316 325h1v5h-1zM317 323h1v3h-1zM318 325h1v1h-1zM319 325h1v1h-1zM320 325h1v3h-1zM321 326h1v2h-1zM322 323h1v4h-1zM323 323h1v4h-1zM324 326h1v2h-1zM325 325h1v3h-1zM326 327h1v1h-1zM327 326h1v2h-1zM328 326h1v4h-1zM329 325h1v5h-1zM330 324h1v2h-1zM331 324h1v5h-1zM332 323h1v6h-1zM333 324h1v2h-1zM334 323h1v2h-1zM335 323h1v3h-1zM336 325h1v4h-1zM337 325h1v4h-1zM338 323h1v3h-1zM339 323h1v4h-1zM340 324h1v3h-1zM341 324h1v3h-1zM342 325h1v2h-1zM343 325h1v3h-1zM344 324h1v3h-1zM345 324h1v1h-1zM346 324h1v1h-1zM347 324h1v4h-1zM348 327h1v1h-1zM349 323h1v5h-1zM350 323h1v4h-1zM351 323h1v4h-1zM352 323h1v3h-1zM353 323h1v3h-1zM354 323h1v2h-1zM355 323h1v4h-1zM356 326h1v3h-1zM357 326h1v3h-1zM358 325h1v2h-1zM359 322h1v4h-1zM360 322h1v3h-1zM361 324h1v2h-1zM362 324h1v4h-1zM363 324h1v4h-1zM364 324h1v6h-1zM365 322h1v8h-1zM366 322h1v5h-1zM368 260h1v3h-1zM369 257h1v6h-1zM370 257h1v4h-1zM371 259h1v3h-1zM372 259h1v3h-1zM373 258h1v3h-1zM374 259h1v2h-1zM375 259h1v2h-1zM376 254h1v7h-1zM377 254h1v6h-1zM378 258h1v3h-1zM379 256h1v5h-1zM380 256h1v5h-1zM381 257h1v4h-1zM382 257h1v3h-1zM383 259h1v3h-1zM384 261h1v3h-1zM386 326h1v4h-1zM387 328h1v2h-1zM388 328h1v1h-1zM389 323h1v6h-1zM390 323h1v4h-1zM391 324h1v3h-1zM392 324h1v4h-1zM393 326h1v3h-1zM394 323h1v6h-1zM395 325h1v4h-1zM396 328h1v4h-1zM397 325h1v7h-1zM398 325h1v1h-1zM399 324h1v2h-1zM400 324h1v6h-1zM401 328h1v2h-1zM402 325h1v4h-1zM403 325h1v3h-1zM404 327h1v2h-1zM405 326h1v3h-1zM406 325h1v2h-1zM407 324h1v2h-1zM408 323h1v2h-1zM409 323h1v3h-1zM410 322h1v4h-1zM411 322h1v4h-1zM412 322h1v5h-1zM413 324h1v3h-1zM414 323h1v2h-1zM415 323h1v5h-1zM416 326h1v2h-1zM417 326h1v3h-1zM418 322h1v6h-1zM419 322h1v2h-1zM420 322h1v7h-1zM421 322h1v5h-1zM422 322h1v5h-1zM423 325h1v1h-1zM424 325h1v1h-1zM425 325h1v2h-1zM426 326h1v1h-1zM427 325h1v4h-1zM428 323h1v6h-1zM429 326h1v1h-1zM430 325h1v2h-1zM431 325h1v1h-1zM432 323h1v3h-1zM433 323h1v6h-1zM434 324h1v5h-1zM435 326h1v1h-1zM436 326h1v5h-1zM437 325h1v6h-1zM438 325h1v4h-1zM439 324h1v5h-1zM440 324h1v3h-1zM441 326h1v2h-1zM442 324h1v4h-1zM443 324h1v6h-1zM444 326h1v4h-1zM445 326h1v2h-1zM446 326h1v2h-1zM447 325h1v2h-1zM448 325h1v2h-1zM449 319h1v8h-1zM450 319h1v9h-1zM451 326h1v2h-1zM452 326h1v1h-1zM453 326h1v1h-1zM454 324h1v3h-1zM455 324h1v4h-1zM456 325h1v2h-1zM457 325h1v5h-1zM458 323h1v3h-1zM459 325h1v3h-1zM460 322h1v4h-1zM461 322h1v4h-1zM462 325h1v3h-1zM463 326h1v2h-1zM464 327h1v2h-1zM465 326h1v3h-1zM466 325h1v2h-1zM467 325h1v1h-1zM468 325h1v4h-1zM469 326h1v3h-1zM470 322h1v7h-1zM471 322h1v7h-1zM472 328h1v1h-1zM473 325h1v4h-1zM474 325h1v4h-1zM475 325h1v4h-1zM476 323h1v3h-1zM477 323h1v5h-1zM478 327h1v1h-1zM479 326h1v2h-1zM480 324h1v3h-1zM481 324h1v5h-1zM482 324h1v5h-1zM483 324h1v3h-1zM484 326h1v2h-1zM485 325h1v3h-1zM486 325h1v2h-1zM487 321h1v7h-1zM488 326h1v2h-1zM489 324h1v3h-1zM490 322h1v4h-1zM491 322h1v5h-1zM492 322h1v5h-1zM493 322h1v3h-1zM494 324h1v5h-1zM495 324h1v5h-1zM496 324h1v6h-1zM497 326h1v4h-1zM498 325h1v2h-1zM499 325h1v2h-1zM500 325h1v4h-1zM501 325h1v4h-1zM502 325h1v6h-1zM503 323h1v8h-1zM504 323h1v4h-1zM505 323h1v4h-1zM506 324h1v3h-1zM507 322h1v3h-1zM508 322h1v4h-1zM509 323h1v2h-1zM510 323h1v2h-1zM511 323h1v1h-1zM512 323h1v5h-1zM513 324h1v4h-1zM514 324h1v4h-1zM515 325h1v3h-1zM516 323h1v5h-1zM517 323h1v5h-1zM518 322h1v2h-1zM519 322h1v4h-1zM520 324h1v2h-1zM521 324h1v4h-1zM522 325h1v3h-1zM523 326h1v2h-1zM524 327h1v1h-1zM525 322h1v6h-1zM526 325h1v6h-1zM527 325h1v6h-1zM528 325h1v4h-1zM529 323h1v6h-1zM530 322h1v2h-1zM531 322h1v7h-1zM532 325h1v4h-1zM533 325h1v4h-1zM534 325h1v1h-1zM535 323h1v3h-1zM536 323h1v6h-1zM537 324h1v5h-1zM538 325h1v3h-1zM539 325h1v1h-1zM540 325h1v4h-1zM541 325h1v4h-1zM542 325h1v1h-1zM543 325h1v2h-1zM544 324h1v4h-1zM545 324h1v4h-1zM546 324h1v3h-1zM547 324h1v3h-1zM548 325h1v2h-1zM549 325h1v3h-1zM550 322h1v6h-1zM551 322h1v6h-1zM552 324h1v4h-1zM553 322h1v3h-1zM554 324h1v4h-1zM555 324h1v4h-1zM556 324h1v2h-1zM557 323h1v5h-1zM558 323h1v2h-1zM559 324h1v2h-1zM560 323h1v3h-1zM561 323h1v4h-1zM562 323h1v3h-1zM563 323h1v3h-1zM564 323h1v3h-1zM565 322h1v4h-1zM566 325h1v2h-1zM567 324h1v3h-1zM568 324h1v6h-1zM569 325h1v5h-1zM570 324h1v2h-1zM571 324h1v2h-1zM572 325h1v1h-1zM573 325h1v4h-1zM574 323h1v6h-1zM575 323h1v5h-1zM576 325h1v3h-1zM577 325h1v2h-1zM578 326h1v1h-1zM579 326h1v2h-1zM580 326h1v2h-1zM581 324h1v4h-1zM582 323h1v5h-1zM583 323h1v6h-1zM584 324h1v5h-1zM585 324h1v4h-1zM586 327h1v3h-1zM587 328h1v2h-1zM588 326h1v3h-1zM589 326h1v2h-1zM590 324h1v4h-1zM591 325h1v6h-1zM592 326h1v5h-1zM593 326h1v4h-1zM594 324h1v6h-1zM595 325h1v3h-1zM596 325h1v1h-1zM597 323h1v3h-1zM598 323h1v4h-1zM600 260h1v6h-1zM601 260h1v6h-1zM602 258h1v3h-1zM603 257h1v4h-1zM604 257h1v2h-1zM605 255h1v4h-1zM606 255h1v5h-1zM607 257h1v3h-1zM608 255h1v3h-1zM609 255h1v5h-1zM610 258h1v2h-1zM611 258h1v2h-1zM612 257h1v3h-1zM613 256h1v3h-1zM614 256h1v5h-1zM615 260h1v5h-1zM616 260h1v7h-1zM618 326h1v1h-1zM619 325h1v2h-1zM620 325h1v4h-1zM621 326h1v3h-1zM622 323h1v5h-1zM623 323h1v7h-1zM624 328h1v2h-1zM625 325h1v4h-1zM626 322h1v6h-1zM627 322h1v4h-1zM628 323h1v3h-1zM629 323h1v5h-1zM630 324h1v2h-1zM631 324h1v2h-1zM632 322h1v8h-1zM633 322h1v2h-1zM634 323h1v7h-1zM635 325h1v1h-1zM636 323h1v3h-1zM637 323h1v5h-1zM638 323h1v5h-1zM639 323h1v5h-1zM640 324h1v4h-1zM641 322h1v3h-1zM642 322h1v3h-1zM643 324h1v3h-1zM644 325h1v2h-1zM645 325h1v1h-1zM646 325h1v1h-1zM647 324h1v2h-1zM648 324h1v1h-1zM649 324h1v3h-1zM650 326h1v3h-1zM651 323h1v6h-1zM652 323h1v4h-1zM653 325h1v3h-1zM654 324h1v3h-1zM655 324h1v1h-1zM656 320h1v5h-1zM657 320h1v9h-1zM658 324h1v5h-1zM659 324h1v4h-1zM660 326h1v2h-1zM661 324h1v6h-1zM662 324h1v3h-1zM663 322h1v5h-1zM664 322h1v3h-1zM665 324h1v3h-1zM666 324h1v5h-1zM667 328h1v1h-1zM668 326h1v3h-1zM669 326h1v1h-1zM670 326h1v2h-1zM671 326h1v2h-1zM672 325h1v3h-1zM673 325h1v3h-1zM674 321h1v7h-1zM675 321h1v4h-1zM676 324h1v2h-1zM677 325h1v1h-1zM678 322h1v4h-1zM679 322h1v3h-1zM680 324h1v3h-1zM681 324h1v5h-1zM682 323h1v6h-1zM683 325h1v2h-1zM684 325h1v3h-1zM685 326h1v2h-1zM686 326h1v2h-1zM687 326h1v2h-1zM688 324h1v4h-1zM689 326h1v1h-1zM690 322h1v5h-1zM691 324h1v4h-1zM692 327h1v1h-1zM693 325h1v3h-1zM694 324h1v3h-1zM695 326h1v2h-1zM696 327h1v1h-1zM697 327h1v1h-1zM698 326h1v2h-1zM699 326h1v3h-1zM700 324h1v5h-1zM701 322h1v3h-1zM702 322h1v9h-1zM703 325h1v6h-1zM704 325h1v3h-1zM705 322h1v5h-1zM706 322h1v1h-1zM707 322h1v6h-1zM708 325h1v3h-1zM709 324h1v3h-1zM710 324h1v3h-1zM711 324h1v6h-1zM712 324h1v6h-1zM713 328h1v1h-1zM714 327h1v2h-1zM715 323h1v5h-1zM716 323h1v4h-1zM717 322h1v3h-1zM718 324h1v5h-1zM719 323h1v6h-1zM720 323h1v4h-1zM721 324h1v4h-1zM722 327h1v1h-1zM723 327h1v2h-1zM724 322h1v7h-1zM725 324h1v1h-1zM726 324h1v4h-1zM727 325h1v3h-1zM728 325h1v1h-1zM729 325h1v2h-1zM730 324h1v3h-1zM731 325h1v4h-1zM732 326h1v3h-1zM733 325h1v3h-1zM734 326h1v2h-1zM735 325h1v3h-1zM736 325h1v3h-1zM737 326h1v4h-1zM738 326h1v4h-1zM739 324h1v6h-1zM740 324h1v6h-1zM741 323h1v7h-1zM742 322h1v4h-1zM743 325h1v1h-1zM744 325h1v5h-1zM745 325h1v7h-1zM746 325h1v7h-1zM747 324h1v2h-1zM748 323h1v3h-1zM749 323h1v4h-1zM750 326h1v3h-1zM751 327h1v2h-1zM752 326h1v2h-1zM753 326h1v3h-1zM754 326h1v3h-1zM755 324h1v3h-1zM756 324h1v7h-1zM757 326h1v5h-1zM758 326h1v1h-1zM759 326h1v2h-1zM760 323h1v5h-1zM761 321h1v3h-1zM762 321h1v5h-1zM763 325h1v1h-1zM764 323h1v5h-1zM765 323h1v5h-1zM766 322h1v5h-1zM767 322h1v4h-1zM768 325h1v2h-1zM769 326h1v2h-1zM770 322h1v6h-1z" fill="#40e0e0"/><rect x="20.5" y="16.5" width="751" height="402" fill="none" stroke="#d0d4f4" stroke-width="1.5"/><circle cx="131" cy="30" r="8.2" fill="#e8582c"/><text x="131" y="35" font-family="Liberation Sans" font-size="16" font-weight="bold" fill="#3a0400" text-anchor="middle">a</text><circle cx="153" cy="30" r="8.2" fill="#e8582c"/><text x="153" y="35" font-family="Liberation Sans" font-size="16" font-weight="bold" fill="#3a0400" text-anchor="middle">b</text><path d="M391 16.5h10.5l-5.25 6.5z" fill="#e8a040"/><rect x="396" y="22" width="1" height="3" fill="#e8a040"/><path d="M766.5 212.5V223.5L760 218z" fill="#f0f040"/><rect x="122" y="1" width="548" height="14" fill="#000"/><rect x="233" y="8" width="325" height="1.2" fill="#e8e8b0"/><path d="M231 2h3v1.5h-1.5v9h1.5v1.5h-3z M560 2h-3v1.5h1.5v9h-1.5v1.5h3z" fill="#909090"/><rect x="275" y="1" width="1.2" height="14" fill="#e8e8a0"/><rect x="293" y="1" width="1.2" height="14" fill="#e8e8a0"/><path d="M392.5 1h8l-4 4.5z" fill="#e8a040"/><path d="M-1 209.5h14l6.5 8l-6.5 8.5h-14z" fill="#f2f020" stroke="#303000" stroke-width="0.8"/><path d="M7.5 212.5h2.3v11h-2.3v-8l-2.2 1.3v-2.3z" fill="#000"/><path d="M0.5 309.5h13l6 8l-6 8h-13z" fill="#000" stroke="#60d8d8" stroke-width="1.4"/><text x="8" y="324" font-family="Liberation Sans" font-size="16" font-weight="bold" fill="#50e0d8" text-anchor="middle">2</text><rect x="486.5" y="40.5" width="284" height="78" rx="6" fill="#000" stroke="#e8e8f0" stroke-width="1.2"/><circle cx="518" cy="52" r="8.2" fill="#e8582c"/><text x="518" y="57" font-family="Liberation Sans" font-size="16" font-weight="bold" fill="#3a0400" text-anchor="middle">a</text><circle cx="518" cy="70.6" r="8.2" fill="#e8582c"/><text x="518" y="75.6" font-family="Liberation Sans" font-size="16" font-weight="bold" fill="#3a0400" text-anchor="middle">b</text><path d="M549 94.2L554.5 85.3L560 94.2z" fill="none" stroke="#f0f064" stroke-width="1.6" stroke-linejoin="miter"/><path d="M680 94.2L685.5 85.3L691 94.2z" fill="none" stroke="#f0f064" stroke-width="1.6" stroke-linejoin="miter"/></svg>
<div class="t" style="left:552px;top:44px;color:#f0f064;letter-spacing:1.4px;font-size:16px;">−<span class="o" style="width:10.30px"><svg width="9" height="16" viewBox="0 0 9 16"><path d="M3.9 13.54V3.88L1.5 5.65V4.32L4.1 2.53H5.9V13.54Z" fill="#f0f064"/></svg></span>47ms</div>
<div class="t" style="left:552px;top:63px;color:#f0f064;letter-spacing:1.4px;font-size:16px;">−<span class="o" style="width:10.30px"><svg width="9" height="16" viewBox="0 0 9 16"><path d="M3.9 13.54V3.88L1.5 5.65V4.32L4.1 2.53H5.9V13.54Z" fill="#f0f064"/></svg></span>24ms</div>
<div class="t" style="left:564px;top:82px;color:#f0f064;letter-spacing:1.1px;font-size:16px;">22.2ms</div>
<div class="t" style="left:690px;top:44px;color:#f0f064;letter-spacing:0.8px;font-size:16px;"><span class="o" style="width:9.70px"><svg width="9" height="16" viewBox="0 0 9 16"><path d="M3.9 13.54V3.88L1.5 5.65V4.32L4.1 2.53H5.9V13.54Z" fill="#f0f064"/></svg></span>.80 V</div>
<div class="t" style="left:690px;top:63px;color:#f0f064;letter-spacing:0.8px;font-size:16px;"><span class="o" style="width:9.70px"><svg width="9" height="16" viewBox="0 0 9 16"><path d="M3.9 13.54V3.88L1.5 5.65V4.32L4.1 2.53H5.9V13.54Z" fill="#f0f064"/></svg></span>.40 V</div>
<div class="t" style="left:694px;top:82px;color:#f0f064;letter-spacing:1.1px;font-size:16px;">400mV</div>
<div class="box" style="left:20px;top:420px;width:322px;height:22px;border-radius:6px;"></div>
<div class="pill" style="left:25px;top:423px;width:26px;height:16px;background:#f2f020;"></div>
<div class="t" style="left:69px;top:423px;color:#f0f060;letter-spacing:1.0px;font-size:16px;"><span class="o" style="width:9.90px"><svg width="9" height="16" viewBox="0 0 9 16"><path d="M3.9 13.54V3.88L1.5 5.65V4.32L4.1 2.53H5.9V13.54Z" fill="#f0f060"/></svg></span>0.0 V</div>
<div class="pill" style="left:186px;top:423px;width:25px;height:16px;background:#30dce4;color:#102030;">2</div>
<div class="t" style="left:229px;top:423px;color:#60d4c4;letter-spacing:1.0px;font-size:16px;"><span class="o" style="width:9.90px"><svg width="9" height="16" viewBox="0 0 9 16"><path d="M3.9 13.54V3.88L1.5 5.65V4.32L4.1 2.53H5.9V13.54Z" fill="#60d4c4"/></svg></span>0.0 V</div>
<div class="box" style="left:344px;top:420px;width:340px;height:39px;border-radius:7px;"></div>
<div class="t" style="left:350px;top:423px;color:#f8f8f8;letter-spacing:1.3px;font-size:16px;">40.0ms</div>
<div class="t" style="left:488px;top:423px;color:#f8f8f8;letter-spacing:1.3px;font-size:16px;">2.50kS/s</div>
<div class="t" style="left:488px;top:440px;color:#f8f8f8;letter-spacing:1.4px;font-size:16px;"><span class="o" style="width:10.30px"><svg width="9" height="16" viewBox="0 0 9 16"><path d="M3.9 13.54V3.88L1.5 5.65V4.32L4.1 2.53H5.9V13.54Z" fill="#f8f8f8"/></svg></span>000 points</div>
<div class="pill" style="left:616px;top:423px;width:25px;height:16px;background:#f2f020;"></div>
<div class="t" style="left:623px;top:441px;color:#f8f8f8;letter-spacing:1.0px;font-size:16px;">0.00 V</div>
<svg width="800" height="480" style="left:0;top:0"><path d="M655 435.5h6l3 -9.5h4" fill="none" stroke="#fff" stroke-width="2"/><path d="M37.8 425h2.4v11h-2.4v-8l-2.2 1.3v-2.3z M628.2 425h2.4v11h-2.4v-8l-2.2 1.3v-2.3z" fill="#000"/></svg>
<div class="box" style="left:687px;top:420px;width:111px;height:39px;border-radius:7px;"></div>
<div class="t" style="left:701px;top:423px;color:#f8f8f8;letter-spacing:0.7px;font-size:16px;">7 Dec  20<span class="o" style="width:9.60px"><svg width="9" height="16" viewBox="0 0 9 16"><path d="M3.9 13.54V3.88L1.5 5.65V4.32L4.1 2.53H5.9V13.54Z" fill="#f8f8f8"/></svg></span><span class="o" style="width:9.60px"><svg width="9" height="16" viewBox="0 0 9 16"><path d="M3.9 13.54V3.88L1.5 5.65V4.32L4.1 2.53H5.9V13.54Z" fill="#f8f8f8"/></svg></span></div>
<div class="t" style="left:692px;top:441px;color:#f8f8f8;letter-spacing:1.15px;font-size:16px;">03:26:47</div>
</body></html>
